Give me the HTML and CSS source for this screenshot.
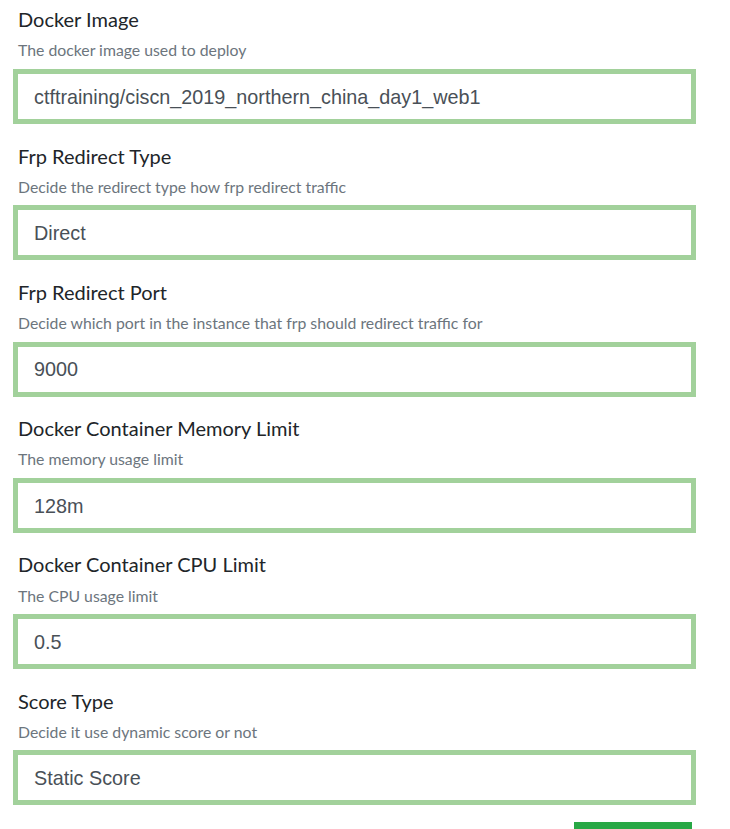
FILE: index.html
```html
<!DOCTYPE html>
<html lang="en">
<head>
<meta charset="utf-8">
<title>Challenge settings</title>
<link rel="stylesheet" href="styles.css">
</head>
<body>
<form class="form">
  <div class="group">
    <label class="label">Docker Image</label>
    <small class="help">The docker image used to deploy</small>
    <input class="field" type="text" value="ctftraining/ciscn_2019_northern_china_day1_web1">
  </div>
  <div class="group">
    <label class="label">Frp Redirect Type</label>
    <small class="help">Decide the redirect type how frp redirect traffic</small>
    <input class="field" type="text" value="Direct">
  </div>
  <div class="group">
    <label class="label">Frp Redirect Port</label>
    <small class="help">Decide which port in the instance that frp should redirect traffic for</small>
    <input class="field" type="text" value="9000">
  </div>
  <div class="group">
    <label class="label">Docker Container Memory Limit</label>
    <small class="help">The memory usage limit</small>
    <input class="field" type="text" value="128m">
  </div>
  <div class="group">
    <label class="label">Docker Container CPU Limit</label>
    <small class="help">The CPU usage limit</small>
    <input class="field" type="text" value="0.5">
  </div>
  <div class="group">
    <label class="label">Score Type</label>
    <small class="help">Decide it use dynamic score or not</small>
    <input class="field" type="text" value="Static Score">
  </div>
  <div class="actions">
    <button class="btn" type="submit" aria-label="Update"></button>
  </div>
</form>
</body>
</html>
```
FILE: styles.css
```css
html, body {
  margin: 0;
  padding: 0;
  background: #ffffff;
  overflow: hidden;
}
body {
  font-family: Lato, "Noto Sans", sans-serif;
  color: #212529;
}
.form {
  display: flex;
  flex-direction: column;
  gap: 19.6px;
  padding: 7.3px 0 0 13px;
  width: 683px;
}
.group {
  display: flex;
  flex-direction: column;
}
.label {
  font-size: 20px;
  line-height: 24px;
  padding-left: 5px;
  color: #212529;
}
.help {
  margin-top: 9.1px;
  font-size: 15.8px;
  line-height: 19px;
  padding-left: 5px;
  color: #6c757d;
}
.field {
  margin-top: 9.6px;
  box-sizing: border-box;
  width: 683px;
  height: 55px;
  border: 5px solid #a2d19b;
  border-radius: 0;
  padding: 1.4px 16px 0;
  font-family: "Liberation Sans", Arial, sans-serif;
  font-size: 19.8px;
  color: #495057;
  background: #ffffff;
  outline: none;
}
.actions {
  display: flex;
  padding-left: 561px;
  margin-top: -3.2px;
}
.btn {
  width: 118px;
  height: 40px;
  border: none;
  background: #28a745;
}
```
